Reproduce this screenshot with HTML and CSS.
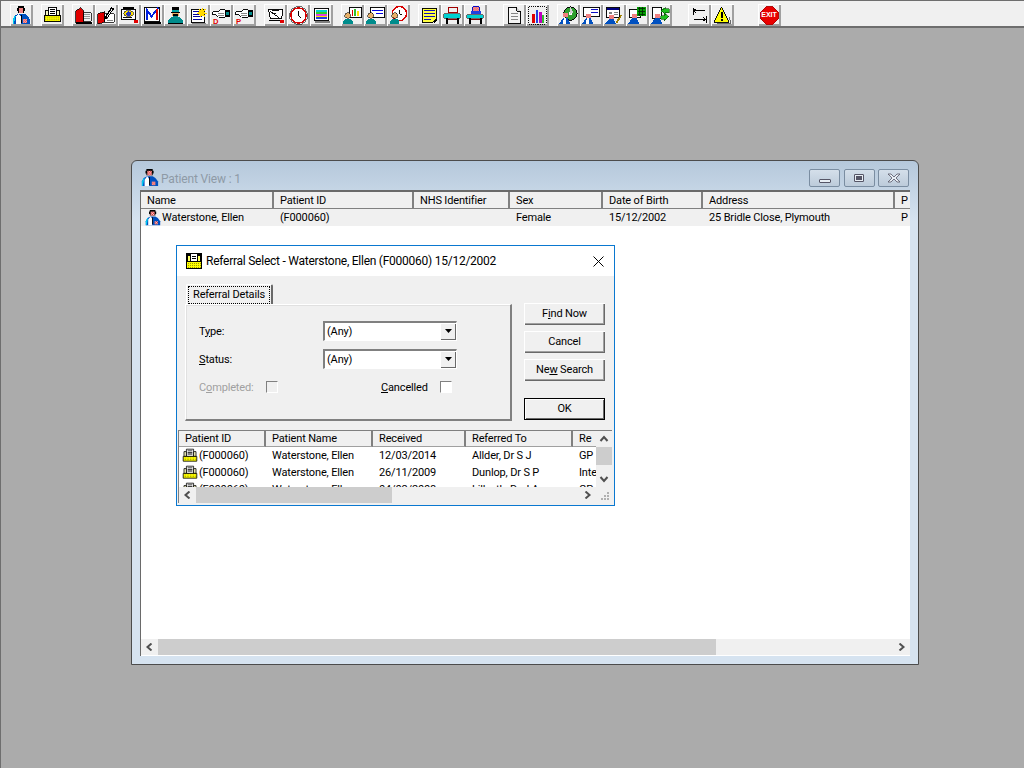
FILE: index.html
```html
<!DOCTYPE html>
<html lang="en">
<head>
<meta charset="utf-8">
<title>Patient View</title>
<link rel="stylesheet" href="styles.css">
</head>
<body>
<svg class="defs" width="0" height="0" aria-hidden="true">
  <defs>
    <pattern id="chk" width="2" height="2" patternUnits="userSpaceOnUse"><rect width="2" height="2" fill="#fff"/><rect width="1" height="1" fill="#e00000"/><rect x="1" y="1" width="1" height="1" fill="#e00000"/></pattern>
    <pattern id="ylw" width="2" height="2" patternUnits="userSpaceOnUse"><rect width="2" height="2" fill="#ffff00"/><rect width="1" height="1" fill="#a0a000"/></pattern>
    <symbol id="i-doctor" viewBox="0 0 20 20"><path d="M6 0h7v2h1v3h-1v2H6V5H5V2h1z" fill="#000"/><rect x="7" y="2" width="5" height="5" fill="url(#chk)"/><path d="M1 19v-5l2-4 4-2h6l3 2 3 4v5z" fill="#0050c0"/><path d="M4 19v-7l3-4 2 3v8z" fill="#fff"/><path d="M1 19v-5l2-4h1l-2 9z" fill="#00c8f0"/><rect x="12" y="14" width="4" height="4" fill="url(#chk)"/><rect x="9" y="9" width="1" height="9" fill="#000"/></symbol>
    <symbol id="i-print" viewBox="0 0 20 20"><path d="M5.500 1.500h9v9h-9z" fill="#fff" stroke="#000"/><path d="M7 3h6v1H7zM7 5h6v1H7zM7 7h6v1H7z" fill="#000"/><path d="M2.500 4.500h3v6h-3zM14.500 4.500h3v6h-3z" fill="#f4f4c0" stroke="#000"/><path d="M1.500 10.500h17v6h-17z" fill="url(#ylw)" stroke="#000"/></symbol>
    <symbol id="i-printblack" viewBox="0 0 16 16"><rect width="16" height="16" fill="#000"/><path d="M2 3h2v5H2zM12 3h2v5h-2z" fill="#ffff60"/><path d="M5 1h6v7H5z" fill="#fff"/><path d="M6 3h4v1H6zM6 5h4v1H6z" fill="#000"/><rect x="1" y="9" width="14" height="6" fill="url(#ylw)"/></symbol>
    <symbol id="i-book" viewBox="0 0 20 20"><path d="M7 2v13l-5 3V5z" fill="#e00000" stroke="#000" stroke-width=".8"/><path d="M7 2l3 3v12H2" fill="#e00000" stroke="#000" stroke-width=".8"/><path d="M10 7h8v9h-8z" fill="#f0f0f0" stroke="#000" stroke-width=".8"/><path d="M11 9h6M11 11h6M11 13h6" stroke="#909090"/><path d="M2 18h17" stroke="#000" stroke-width="1.500"/></symbol>
    <symbol id="i-pen" viewBox="0 0 20 20"><path d="M1 8l7-2v11l-7 2z" fill="#e00000" stroke="#000" stroke-width=".8"/><path d="M8 8h10v9H8z" fill="#fff" stroke="#000" stroke-width=".8"/><path d="M7 13L15 1l3 2-8 11z" fill="#000"/><path d="M10 12l6-9" stroke="#fff"/><path d="M10 15h7M10 13h2" stroke="#808080"/></symbol>
    <symbol id="i-eye" viewBox="0 0 20 20"><path d="M1.500 3.500h15v11h-15z" fill="#fff" stroke="#000"/><path d="M3 1h12v2H3z" fill="#000"/><ellipse cx="9" cy="8" rx="5" ry="3" fill="#ffe000" stroke="#000" stroke-width=".6"/><circle cx="9" cy="8" r="2.500" fill="#2030c0"/><path d="M3 12.500h10" stroke="#000"/><path d="M15 15h4v3h-4z" fill="#e00000"/></symbol>
    <symbol id="i-m" viewBox="0 0 20 20"><path d="M1.500 1.500h16v15h-16z" fill="#fff" stroke="#000"/><path d="M4 15V4l5 7 7-9" fill="none" stroke="#0020e0" stroke-width="2"/><path d="M15 3v12" stroke="#e00000" stroke-width="2"/><path d="M1 18h18" stroke="#000" stroke-width="1.500"/></symbol>
    <symbol id="i-nurse" viewBox="0 0 20 20"><path d="M6 1h8v9H6z" fill="#e8b068"/><path d="M6 1h8v3H6zM5 6h10v1H5zM7 8h6v2H7z" fill="#000"/><path d="M6 4h8v2H6z" fill="#00a0a0"/><path d="M2 18v-3l5-4h6l5 4v3z" fill="#008c8c"/><path d="M2 18h16v1H2z" fill="#000"/></symbol>
    <symbol id="i-note" viewBox="0 0 20 20"><path d="M2.500 3.500h14v14h-14z" fill="#fff" stroke="#000"/><path d="M4 5h6v1H4zM4 8h6v1H4zM4 11h10v1H4zM4 14h10v1H4z" fill="#0000a0"/><path d="M14 1l1 3 3-1-2 3 3 2-3 1 1 3-3-2-2 2-1-3-3-1 3-2-1-3 3 1z" fill="#ffd800"/><path d="M3 18h15" stroke="#808080"/></symbol>
    <symbol id="i-hand-d" viewBox="0 0 20 20"><path d="M1 6h6l2-2h5v8H7L4 9H1z" fill="#fff" stroke="#000"/><path d="M6 8h7M6 10h7" stroke="#808080"/><rect x="14" y="4" width="5" height="8" fill="#000"/><rect x="15" y="6" width="3" height="3" fill="#008c8c"/><text x="1" y="19" class="icon-letter">D</text></symbol>
    <symbol id="i-hand-p" viewBox="0 0 20 20"><path d="M1 6h6l2-2h5v8H7L4 9H1z" fill="#fff" stroke="#000"/><path d="M6 8h7M6 10h7" stroke="#808080"/><rect x="14" y="4" width="5" height="8" fill="#000"/><rect x="15" y="6" width="3" height="3" fill="#008c8c"/><text x="1" y="19" class="icon-letter">P</text></symbol>
    <symbol id="i-tag" viewBox="0 0 20 20"><path d="M2.500 3.500h15l-1 10h-12z" fill="#fff" stroke="#000"/><path d="M4 5l12 9M6 5h8M6 8h4" stroke="#000"/><path d="M15 15h4v3h-4z" fill="#e00000"/><path d="M3 15h12" stroke="#000" stroke-width="1.500"/></symbol>
    <symbol id="i-clock" viewBox="0 0 20 20"><circle cx="10" cy="10" r="8" fill="#fff" stroke="#d80000" stroke-width="1.600"/><circle cx="10" cy="10" r="9.400" fill="none" stroke="#000" stroke-width=".6"/><path d="M10 5v5l3 3" fill="none" stroke="#000" stroke-width="1.100"/></symbol>
    <symbol id="i-bars" viewBox="0 0 20 20"><path d="M2.500 2.500h15v13h-15z" fill="#fff" stroke="#000"/><path d="M4 4h12v2H4z" fill="#00d0d0"/><path d="M4 6h12v2H4z" fill="#30d030"/><path d="M4 8h12v2H4z" fill="#e040e0"/><path d="M4 10h12v2H4z" fill="#ffe000"/><path d="M4 12h12v2H4z" fill="#2040e0"/><path d="M3 17h16" stroke="#808080" stroke-width="1.500"/></symbol>
    <symbol id="i-screen1" viewBox="0 0 20 20"><path d="M6.500 1.500h13v11h-13z" fill="#fff" stroke="#000"/><path d="M9 4h2v6H9z" fill="#e00000"/><path d="M12 3h2v7h-2z" fill="#30c030"/><path d="M15 5h2v5h-2z" fill="#ffe000"/><circle cx="5" cy="10" r="3" fill="#e8b068" stroke="#000" stroke-width=".6"/><path d="M0 19v-3l2-2h6l2 2v3z" fill="#008c8c"/></symbol>
    <symbol id="i-screen2" viewBox="0 0 20 20"><path d="M4.500 1.500h15v11h-15z" fill="#fff" stroke="#000"/><path d="M6 4h12v1H6zM11 7h7v1h-7z" fill="#0000e0"/><path d="M12 10h6v1h-6z" fill="#e00000"/><circle cx="5" cy="10" r="3" fill="#e8b068" stroke="#000" stroke-width=".6"/><path d="M0 19v-3l2-2h6l2 2v3z" fill="#008c8c"/></symbol>
    <symbol id="i-screen3" viewBox="0 0 20 20"><circle cx="11" cy="8" r="7.500" fill="#fff" stroke="#d80000" stroke-width="1.500"/><path d="M11 4v4l3 2" fill="none" stroke="#000"/><circle cx="6" cy="10" r="3" fill="#e8b068" stroke="#000" stroke-width=".6"/><path d="M1 19v-3l2-2h6l2 2v3z" fill="#008c8c"/></symbol>
    <symbol id="i-memo" viewBox="0 0 20 20"><path d="M2.500 2.500h15v11l-4 4h-11z" fill="#ffff40" stroke="#000"/><path d="M4 5h12M4 8h12M4 11h12M4 14h8" stroke="#0000c0"/><path d="M14 17l4-4v2l-3 3z" fill="#000"/></symbol>
    <symbol id="i-bed" viewBox="0 0 20 20"><path d="M6 2h9v5H6z" fill="none" stroke="#a00000" stroke-width="1.200"/><path d="M1 8h17v5H1z" fill="#00d0d0" stroke="#000" stroke-width=".6"/><path d="M3 13h2v6H3zM15 13h2v6h-2z" fill="#000"/><path d="M5 14h10v1H5z" fill="#800000"/></symbol>
    <symbol id="i-bed2" viewBox="0 0 20 20"><path d="M7 1h7v6H7z" fill="url(#chk)" stroke="#0000c0"/><path d="M5 5h11v3H5z" fill="#2040e0"/><path d="M1 9h17v4H1z" fill="#00d0d0" stroke="#000" stroke-width=".6"/><path d="M3 13h2v6H3zM15 13h2v6h-2z" fill="#000"/><path d="M5 14h10v1H5z" fill="#800000"/></symbol>
    <symbol id="i-doc" viewBox="0 0 20 20"><path d="M3.500 1.500h9l4 4v13h-13z" fill="#f4f4f4" stroke="#000"/><path d="M12.500 1.500v4h4" fill="#d0d0d0" stroke="#000"/><path d="M6 8h8M6 11h8M6 14h8" stroke="#808080"/></symbol>
    <symbol id="i-chart" viewBox="0 0 20 20"><path d="M1 1h18M1 19h18M1 1v18M19 1v18" stroke="#000" stroke-dasharray="1 1"/><path d="M4 8h3v10H4z" fill="#e00000"/><path d="M8 4h3v14H8z" fill="#2040e0"/><path d="M12 6h3v12h-3z" fill="#c000c0"/><path d="M15 9h2v9h-2z" fill="#30c030"/></symbol>
    <symbol id="i-patdisk" viewBox="0 0 20 20"><circle cx="12" cy="8" r="7" fill="#30a030" stroke="#000"/><circle cx="12" cy="8" r="2" fill="#fff"/><path d="M12 1l3 6-3 1z" fill="#d0d0d0"/><rect x="4" y="7" width="5" height="5" fill="url(#chk)"/><path d="M0 19l4-6h5l3 6z" fill="#0050c0"/><path d="M4 19l1-6h2l1 6z" fill="#fff"/></symbol>
    <symbol id="i-patform" viewBox="0 0 20 20"><path d="M1.500 1.500h17v10h-17z" fill="#fff" stroke="#000"/><path d="M9 4h8M9 7h8" stroke="#0000c0"/><rect x="4" y="8" width="5" height="5" fill="url(#chk)"/><path d="M0 19l4-6h5l3 6z" fill="#0050c0"/><path d="M4 19l1-6h2l1 6z" fill="#fff"/></symbol>
    <symbol id="i-patsign" viewBox="0 0 20 20"><path d="M1.500 1.500h14v11h-14z" fill="#fff" stroke="#000"/><path d="M2 2h13v2H2z" fill="#000080"/><path d="M4 6h3v2H4zM9 6h5v1H9zM9 8h5v1H9z" fill="#808080"/><path d="M11 17l6-8 1 1-5 8z" fill="#a08000"/><rect x="4" y="9" width="5" height="5" fill="url(#chk)"/><path d="M0 19l4-5h5l3 5z" fill="#0050c0"/></symbol>
    <symbol id="i-patgrn" viewBox="0 0 20 20"><path d="M1.500 3.500h12v9h-12z" fill="#fff" stroke="#000"/><rect x="9" y="1" width="10" height="10" fill="#00a000"/><path d="M10 3h8M10 6h8M10 9h8M12 1v10M15 1v10" stroke="#003000"/><rect x="4" y="8" width="5" height="5" fill="url(#chk)"/><path d="M0 19l4-6h5l3 6z" fill="#0050c0"/></symbol>
    <symbol id="i-patarr" viewBox="0 0 20 20"><path d="M1.500 1.500h10v12h-10z" fill="#fff" stroke="#000"/><path d="M10 5l5-4v2h4v4h-4v2zM19 11l-5-3v2h-4v4h4v2z" fill="#20c020" stroke="#004000" stroke-width=".6"/><rect x="4" y="8" width="5" height="5" fill="url(#chk)"/><path d="M0 19l4-6h5l3 6z" fill="#0050c0"/></symbol>
    <symbol id="i-tabs" viewBox="0 0 20 20"><path d="M4 2v7M17 11v7M4 5h12M6 3L4 5l2 2M4 14h12M14 12l2 2-2 2" fill="none" stroke="#000" stroke-width="1.300"/></symbol>
    <symbol id="i-warn" viewBox="0 0 20 20"><path d="M9 1l8 16H1z" fill="#ffff00" stroke="#000"/><path d="M8 6h2v7H8zM8 14h2v2H8z" fill="#000"/><path d="M17 12l2 6H4" fill="none" stroke="#606060"/></symbol>
    <symbol id="i-exit" viewBox="0 0 20 20"><path d="M6 1h8l5 5v8l-5 5H6l-5-5V6z" fill="#e80000" stroke="#b00000"/></symbol>
    <symbol id="i-down" viewBox="0 0 9 5"><path d="M1 0h7L4.500 4z" fill="#000"/></symbol>
    <symbol id="i-left" viewBox="0 0 8 8"><path d="M6 .5L2 4l4 3.500" fill="none" stroke="#505050" stroke-width="2"/></symbol>
    <symbol id="i-right" viewBox="0 0 8 8"><path d="M2 .5L6 4 2 7.500" fill="none" stroke="#505050" stroke-width="2"/></symbol>
    <symbol id="i-up" viewBox="0 0 8 8"><path d="M.5 6L4 2l3.500 4" fill="none" stroke="#505050" stroke-width="2"/></symbol>
    <symbol id="i-dn" viewBox="0 0 8 8"><path d="M.5 2L4 6l3.500-4" fill="none" stroke="#505050" stroke-width="2"/></symbol>
  </defs>
</svg>

<div class="desktop">
  <nav class="toolbar">
    <div class="tgroup"><button class="tool"><svg class="ico"><use href="#i-doctor"/></svg></button></div>
    <div class="tgroup"><button class="tool"><svg class="ico"><use href="#i-print"/></svg></button></div>
    <div class="tgroup">
      <button class="tool"><svg class="ico"><use href="#i-book"/></svg></button>
      <button class="tool"><svg class="ico"><use href="#i-pen"/></svg></button>
      <button class="tool"><svg class="ico"><use href="#i-eye"/></svg></button>
      <button class="tool"><svg class="ico"><use href="#i-m"/></svg></button>
      <button class="tool"><svg class="ico"><use href="#i-nurse"/></svg></button>
      <button class="tool"><svg class="ico"><use href="#i-note"/></svg></button>
      <button class="tool"><svg class="ico"><use href="#i-hand-d"/></svg></button>
      <button class="tool"><svg class="ico"><use href="#i-hand-p"/></svg></button>
    </div>
    <div class="tgroup">
      <button class="tool"><svg class="ico"><use href="#i-tag"/></svg></button>
      <button class="tool"><svg class="ico"><use href="#i-clock"/></svg></button>
      <button class="tool"><svg class="ico"><use href="#i-bars"/></svg></button>
    </div>
    <div class="tgroup">
      <button class="tool"><svg class="ico"><use href="#i-screen1"/></svg></button>
      <button class="tool"><svg class="ico"><use href="#i-screen2"/></svg></button>
      <button class="tool"><svg class="ico"><use href="#i-screen3"/></svg></button>
    </div>
    <div class="tgroup">
      <button class="tool"><svg class="ico"><use href="#i-memo"/></svg></button>
      <button class="tool"><svg class="ico"><use href="#i-bed"/></svg></button>
      <button class="tool"><svg class="ico"><use href="#i-bed2"/></svg></button>
    </div>
    <div class="tgroup wide">
      <button class="tool"><svg class="ico"><use href="#i-doc"/></svg></button>
      <button class="tool"><svg class="ico"><use href="#i-chart"/></svg></button>
    </div>
    <div class="tgroup">
      <button class="tool"><svg class="ico"><use href="#i-patdisk"/></svg></button>
      <button class="tool"><svg class="ico"><use href="#i-patform"/></svg></button>
      <button class="tool"><svg class="ico"><use href="#i-patsign"/></svg></button>
      <button class="tool"><svg class="ico"><use href="#i-patgrn"/></svg></button>
      <button class="tool"><svg class="ico"><use href="#i-patarr"/></svg></button>
    </div>
    <div class="tgroup wide">
      <button class="tool"><svg class="ico"><use href="#i-tabs"/></svg></button>
      <button class="tool"><svg class="ico"><use href="#i-warn"/></svg></button>
    </div>
    <div class="tgroup wider">
      <button class="tool exit-tool"><svg class="ico"><use href="#i-exit"/></svg><span class="exit-text">EXIT</span></button>
    </div>
  </nav>

  <section class="mdi-window">
    <header class="mdi-title">
      <svg class="ico-18"><use href="#i-doctor"/></svg>
      <span class="mdi-caption">Patient View : 1</span>
      <div class="mdi-controls">
        <span class="mdi-btn"><span class="glyph-min"></span></span>
        <span class="mdi-btn"><span class="glyph-max"></span></span>
        <span class="mdi-btn"><svg class="glyph-x" viewBox="0 0 14 10"><path d="M1 1h3l3 3 3-3h3L9 5l4 4h-3L7 6 4 9H1l4-4z" fill="#e8eef4" stroke="#556" stroke-width=".8"/></svg></span>
      </div>
    </header>
    <div class="mdi-client">
      <div class="plist">
        <div class="phead prow">
          <span class="pc c-name">Name</span><span class="pc c-id">Patient ID</span><span class="pc c-nhs">NHS Identifier</span><span class="pc c-sex">Sex</span><span class="pc c-dob">Date of Birth</span><span class="pc c-addr">Address</span><span class="pc c-p">P</span>
        </div>
        <div class="pdata prow">
          <span class="pc c-name name-cell"><svg class="ico-16"><use href="#i-doctor"/></svg>Waterstone, Ellen</span><span class="pc c-id">(F000060)</span><span class="pc c-nhs"></span><span class="pc c-sex">Female</span><span class="pc c-dob">15/12/2002</span><span class="pc c-addr">25 Bridle Close, Plymouth</span><span class="pc c-p">P</span>
        </div>
      </div>
      <div class="hscroll mdi-hscroll">
        <svg class="arrow"><use href="#i-left"/></svg>
        <div class="hs-track"><div class="hs-thumb mdi-thumb"></div></div>
        <svg class="arrow"><use href="#i-right"/></svg>
      </div>
    </div>
  </section>

  <section class="dialog">
    <header class="dlg-title">
      <svg class="ico-16"><use href="#i-printblack"/></svg>
      <span class="dlg-caption">Referral Select - Waterstone, Ellen (F000060) 15/12/2002</span>
      <svg class="dlg-close" viewBox="0 0 11 11"><path d="M.5.5l10 10M10.500.5l-10 10" stroke="#000" fill="none"/></svg>
    </header>
    <div class="dlg-body">
      <div class="dlg-top">
        <div class="tabs">
          <div class="tab"><span class="tab-focus">Referral Details</span></div>
          <div class="panel">
            <div class="form-row"><span class="flabel">T<u>y</u>pe:</span><div class="combo"><span class="combo-val">(Any)</span><span class="combo-btn"><svg class="combo-arrow"><use href="#i-down"/></svg></span></div></div>
            <div class="form-row"><span class="flabel"><u>S</u>tatus:</span><div class="combo"><span class="combo-val">(Any)</span><span class="combo-btn"><svg class="combo-arrow"><use href="#i-down"/></svg></span></div></div>
            <div class="check-row">
              <span class="flabel-c disabled">C<u>o</u>mpleted:</span><span class="check check-off"></span>
              <span class="flabel-r"><u>C</u>ancelled</span><span class="check"></span>
            </div>
          </div>
        </div>
        <div class="actions">
          <button class="btn">F<u>i</u>nd Now</button>
          <button class="btn">Cancel</button>
          <button class="btn">Ne<u>w</u> Search</button>
          <button class="btn btn-default">OK</button>
        </div>
      </div>
      <div class="rlist">
        <div class="rlist-main">
          <div class="rclip">
            <div class="rhead rrow"><span class="rc r-id">Patient ID</span><span class="rc r-name">Patient Name</span><span class="rc r-rec">Received</span><span class="rc r-to">Referred To</span><span class="rc r-re">Re</span></div>
            <div class="rrow rdata"><span class="rc r-id icon-cell"><svg class="ico-16"><use href="#i-print"/></svg>(F000060)</span><span class="rc r-name">Waterstone, Ellen</span><span class="rc r-rec">12/03/2014</span><span class="rc r-to">Allder, Dr S J</span><span class="rc r-re">GP</span></div>
            <div class="rrow rdata"><span class="rc r-id icon-cell"><svg class="ico-16"><use href="#i-print"/></svg>(F000060)</span><span class="rc r-name">Waterstone, Ellen</span><span class="rc r-rec">26/11/2009</span><span class="rc r-to">Dunlop, Dr S P</span><span class="rc r-re">Inte</span></div>
            <div class="rrow rdata"><span class="rc r-id icon-cell"><svg class="ico-16"><use href="#i-print"/></svg>(F000060)</span><span class="rc r-name">Waterstone, Ellen</span><span class="rc r-rec">04/02/2008</span><span class="rc r-to">Lilleyth, Dr J A</span><span class="rc r-re">GP</span></div>
          </div>
          <div class="vscroll">
            <svg class="varrow"><use href="#i-up"/></svg>
            <div class="vs-track"><div class="vs-thumb"></div></div>
            <svg class="varrow"><use href="#i-dn"/></svg>
          </div>
        </div>
        <div class="rlist-foot">
          <div class="hscroll dlg-hscroll">
            <svg class="arrow"><use href="#i-left"/></svg>
            <div class="hs-track"><div class="hs-thumb dlg-thumb"></div></div>
            <svg class="arrow"><use href="#i-right"/></svg>
          </div>
          <svg class="grip" viewBox="0 0 16 16"><path d="M11 5h2v2h-2zM8 8h2v2H8zM11 8h2v2h-2zM5 11h2v2H5zM8 11h2v2H8zM11 11h2v2h-2z" fill="#b0b0b0"/></svg>
        </div>
      </div>
    </div>
  </section>
</div>
</body>
</html>
```

FILE: styles.css
```css
* { box-sizing: border-box; }
html, body { margin: 0; padding: 0; }
body { font-family: Roboto, "Liberation Sans", Arial, sans-serif; font-size: 11px; letter-spacing: -0.15px; color: #000; overflow: hidden; }
.defs { position: absolute; }
.icon-letter { font: bold 8px "Liberation Sans", sans-serif; fill: #e00000; }

.desktop { position: relative; width: 1024px; height: 768px; background: #ababab; overflow: hidden; border-left: 1px solid #6e6e6e; }

.toolbar { display: flex; height: 28px; padding: 3px 0 0 9px; gap: 8px; background: #f0f0f0; border-top: 1px solid #6e6e6e; border-bottom: 2px solid #6e6e6e; }
.tgroup { display: flex; }
.wide { margin-left: 8px; }
.wider { margin-left: 16px; }
.tool { position: relative; width: 23px; height: 22px; padding: 0 1px 0 0; border: 0; background: #f0f0f0; display: flex; align-items: center; justify-content: center; box-shadow: inset 1px 1px #fff, inset -2px -2px #a0a0a0; }
.ico { width: 19px; height: 19px; shape-rendering: crispEdges; }
.ico-16 { width: 16px; height: 16px; flex: none; }
.ico-18 { width: 18px; height: 18px; flex: none; }
.exit-text { position: absolute; left: 0; right: 1px; top: 6px; text-align: center; color: #fff; font: bold 7px/9px "Liberation Sans", sans-serif; }

.mdi-window { position: absolute; left: 130px; top: 160px; width: 788px; height: 505px; border: 1px solid #4c4c4c; border-radius: 6px 6px 0 0; background: linear-gradient(180deg, #b5c8db 0, #d6e3f0 60px); padding: 0 8px 8px; display: flex; flex-direction: column; }
.mdi-title { display: flex; align-items: flex-start; height: 29px; flex: none; gap: 2px; padding: 8px 0 0 1px; }
.mdi-caption { color: #8e9aa6; font-size: 12px; line-height: 20px; }
.mdi-controls { margin-left: auto; margin-right: 1px; display: flex; gap: 3.500px; }
.mdi-btn { width: 31px; height: 18px; border: 1px solid #7a8da1; border-radius: 2px; background: linear-gradient(180deg, #d4dfea, #bccbda); display: flex; align-items: center; justify-content: center; }
.glyph-min { width: 12px; height: 4px; margin-top: 5px; background: #e8eef4; border: 1px solid #556; border-radius: 1px; }
.glyph-max { width: 10px; height: 8px; background: #556; border: 1px solid #556; box-shadow: inset 0 0 0 1px #e8eef4; border-radius: 1px; }
.glyph-x { width: 14px; height: 10px; }
.mdi-client { flex: 1; background: #fff; border-top: 2px solid #6a6a6a; border-left: 1px solid #6a6a6a; display: flex; flex-direction: column; overflow: hidden; }
.plist { flex: 1; overflow: hidden; }
.prow { display: flex; white-space: nowrap; }
.phead { height: 17px; }
.phead .pc { background: #f0f0f0; border-right: 2px solid #808080; border-bottom: 1px solid #808080; line-height: 18px; }
.pc { padding-left: 6px; overflow: hidden; flex: none; }
.pdata { height: 17px; background: #f0f0f0; line-height: 17px; }
.c-name { width: 133px; }
.c-id { width: 140px; }
.c-nhs { width: 96px; }
.c-sex { width: 93px; }
.c-dob { width: 100px; }
.c-addr { width: 192px; }
.c-p { width: 15px; }
.phead .c-p { border-right: 0; }
.name-cell { display: flex; align-items: center; gap: 1px; padding-left: 4px; }
.hscroll { display: flex; align-items: center; height: 16px; flex: none; background: #f0f0f0; }
.mdi-hscroll { margin-bottom: 1px; }
.arrow { width: 17px; height: 8px; flex: none; }
.hs-track { flex: 1; height: 16px; }
.hs-thumb { height: 16px; background: #cdcdcd; }
.mdi-thumb { width: 558px; }
.dlg-thumb { width: 196px; }

.dialog { position: absolute; left: 175px; top: 245px; width: 439px; height: 261px; border: 1px solid #0a78d0; background: #f0f0f0; display: flex; flex-direction: column; }
.dlg-title { height: 30px; flex: none; background: #fff; display: flex; align-items: center; padding: 0 10px 0 9px; gap: 4px; }
.dlg-caption { font-size: 12px; letter-spacing: -0.25px; flex: 1; white-space: nowrap; }
.dlg-close { width: 11px; height: 11px; }
.dlg-body { flex: 1; display: flex; flex-direction: column; padding: 8px 2px 2px 1px; }
.dlg-top { display: flex; height: 146px; flex: none; padding-left: 7px; }
.tabs { width: 327px; display: flex; flex-direction: column; align-items: flex-start; }
.tab { height: 20px; padding: 1px 1px 0 1px; margin-left: 1px; border-top: 1px solid #fff; border-left: 1px solid #fff; border-right: 2px solid #696969; border-radius: 2px 2px 0 0; }
.tab-focus { display: block; padding: 0 4px; line-height: 16px; border: 1px dotted #000; white-space: nowrap; }
.panel { width: 100%; height: 117px; border: 1px solid #fff; border-right: 2px solid #808080; border-bottom: 2px solid #808080; box-shadow: inset 1px 1px #e0e0e0; padding: 16px 0 0 13px; }
.form-row { display: flex; align-items: center; height: 20px; margin-bottom: 8px; }
.flabel { width: 124px; flex: none; }
.combo { width: 134px; height: 20px; background: #fff; border-top: 2px solid #808080; border-left: 2px solid #808080; border-right: 1px solid #fff; border-bottom: 1px solid #fff; display: flex; align-items: center; }
.combo-val { flex: 1; padding-left: 2px; }
.combo-btn { width: 16px; height: 17px; background: #f0f0f0; box-shadow: inset 1px 1px #fff, inset -1px -1px #696969; display: flex; align-items: center; justify-content: center; }
.combo-arrow { width: 9px; height: 5px; }
.check-row { display: flex; align-items: center; height: 16px; margin-top: 10px; }
.flabel-c { width: 67px; flex: none; }
.disabled { color: #a0a0a0; }
.flabel-r { margin-left: 103px; width: 59px; flex: none; }
.check { width: 12px; height: 12px; background: #fff; border-top: 1px solid #808080; border-left: 1px solid #808080; border-right: 1px solid #fff; border-bottom: 1px solid #fff; }
.check-off { background: #f0f0f0; }
.actions { width: 81px; margin-left: 12px; padding-top: 19px; display: flex; flex-direction: column; gap: 6px; }
.btn { height: 22px; padding: 0 0 2px; border: 0; background: #f0f0f0; font: inherit; letter-spacing: inherit; box-shadow: inset 1px 1px #fff, inset -1px -1px #696969, inset -2px -2px #a0a0a0; }
.btn-default { margin-top: 11px; border: 1px solid #000; box-shadow: inset 1px 1px #fff, inset -1px -1px #696969; }
.rlist { flex: 1; border-top: 1px solid #808080; border-left: 1px solid #808080; display: flex; flex-direction: column; background: #fff; }
.rlist-main { display: flex; height: 56px; flex: none; }
.rclip { flex: 1; overflow: hidden; }
.rrow { display: flex; white-space: nowrap; }
.rhead { height: 16px; }
.rhead .rc { background: #f0f0f0; border-right: 2px solid #808080; border-bottom: 1px solid #a0a0a0; line-height: 15px; }
.rc { padding-left: 6px; flex: none; overflow: hidden; }
.rdata { height: 17px; line-height: 17px; }
.r-id { width: 87px; }
.r-name { width: 107px; }
.r-rec { width: 93px; }
.r-to { width: 107px; }
.r-re { width: 30px; }
.icon-cell { display: flex; align-items: center; padding-left: 3px; gap: 1px; }
.vscroll { width: 16px; flex: none; background: #f0f0f0; display: flex; flex-direction: column; align-items: stretch; }
.varrow { height: 8px; width: 16px; flex: none; margin: 4px 0; }
.vs-track { flex: 1; }
.vs-thumb { height: 18px; background: #cdcdcd; }
.rlist-foot { display: flex; flex: 1; }
.dlg-hscroll { flex: 1; }
.grip { width: 16px; height: 16px; flex: none; background: #f0f0f0; }
```
